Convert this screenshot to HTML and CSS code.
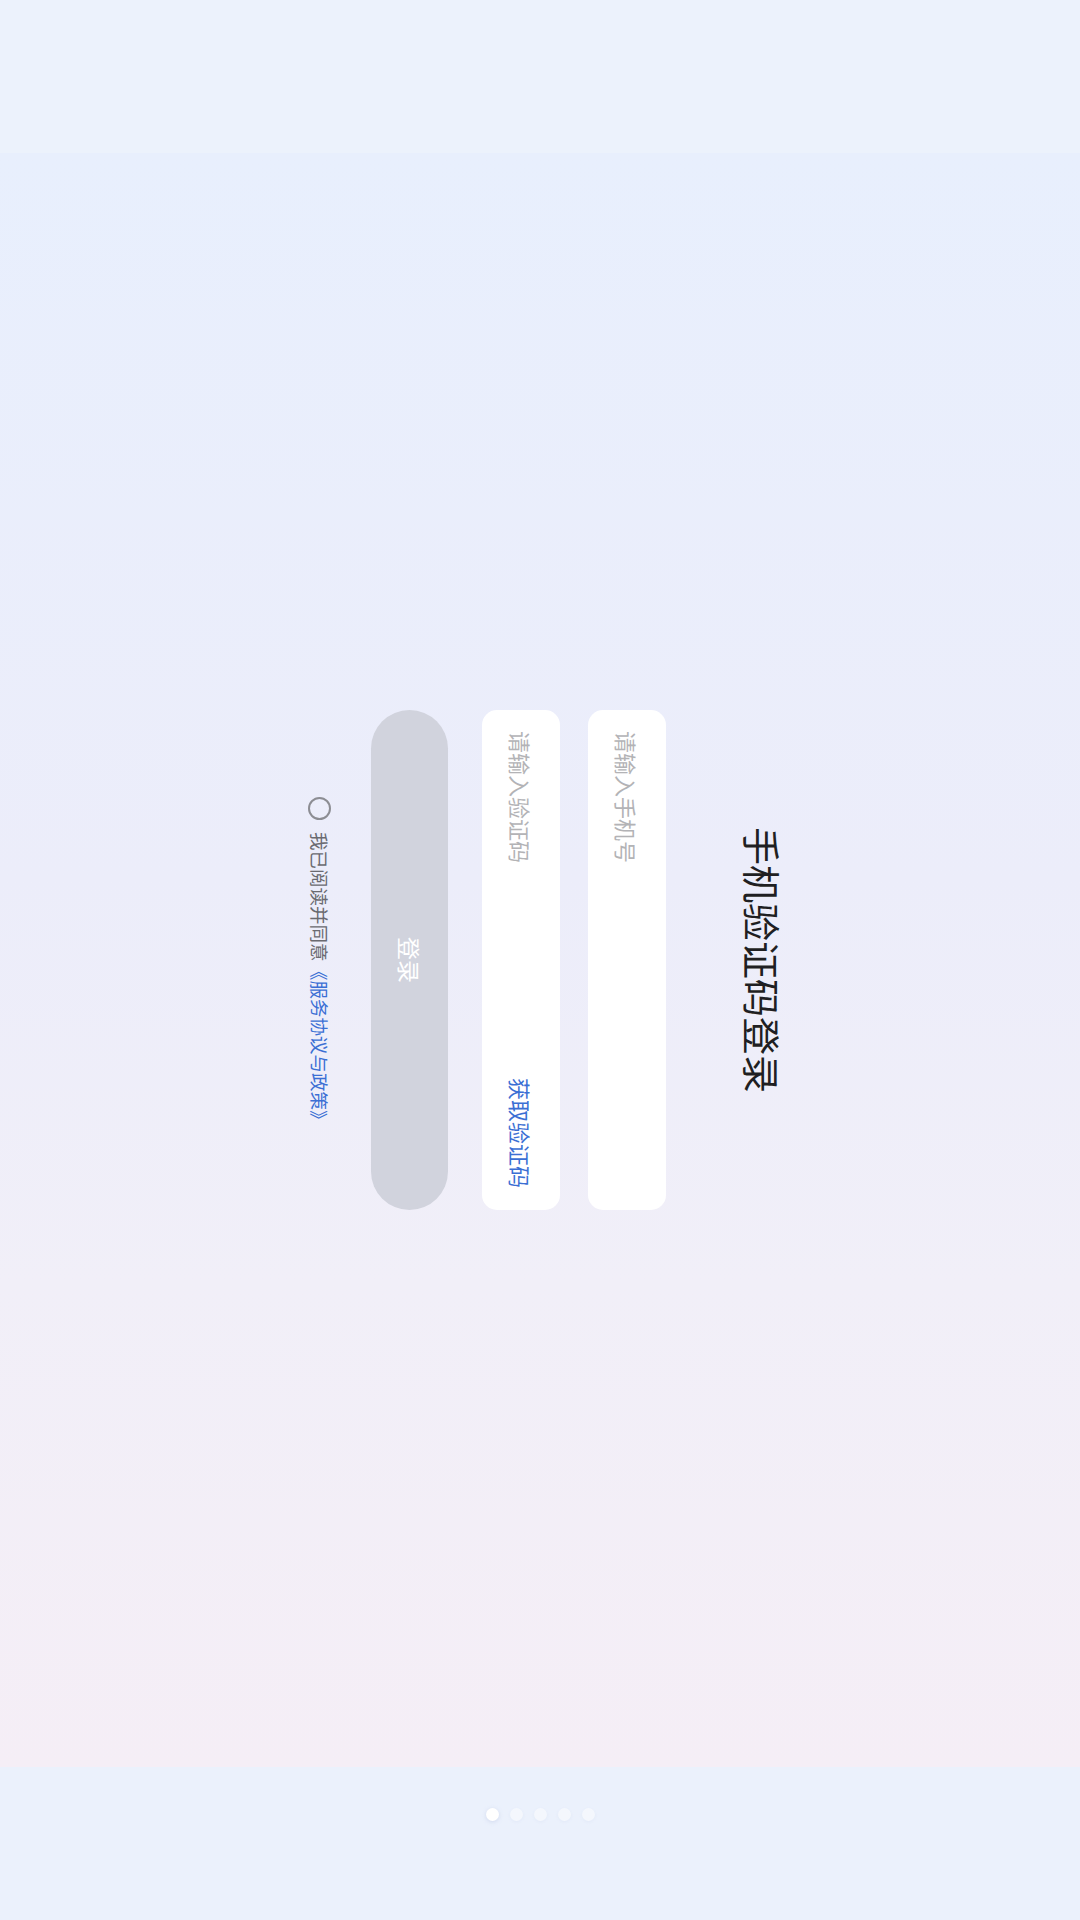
FILE: index.html
```html
<!DOCTYPE html>
<html lang="zh-CN">
<head>
<meta charset="utf-8">
<title>手机验证码登录</title>
<link rel="stylesheet" href="styles.css">
</head>
<body>
<div class="page">
  <div class="top-band"></div>
  <main class="main">
    <form class="form">
      <h1 class="title">手机验证码登录</h1>
      <div class="field">
        <span class="placeholder">请输入手机号</span>
      </div>
      <div class="field field-code">
        <span class="placeholder">请输入验证码</span>
        <span class="get-code">获取验证码</span>
      </div>
      <div class="login-btn">登录</div>
      <div class="agree">
        <span class="radio"></span>
        <span class="agree-text">我已阅读并同意</span><span class="agree-link">《服务协议与政策》</span>
      </div>
    </form>
  </main>
  <div class="bottom-band">
    <div class="dots">
      <span class="dot active"></span>
      <span class="dot"></span>
      <span class="dot"></span>
      <span class="dot"></span>
      <span class="dot"></span>
    </div>
  </div>
</div>
</body>
</html>
```

FILE: styles.css
```css
html, body {
  margin: 0;
  padding: 0;
}
body {
  width: 1080px;
  height: 1920px;
  font-family: "Noto Sans CJK SC", "Noto Sans", sans-serif;
  overflow: hidden;
}
.page {
  width: 1080px;
  height: 1920px;
  display: flex;
  flex-direction: column;
}
.top-band {
  height: 153px;
  background: #ecf2fc;
  flex: none;
}
.main {
  flex: 1;
  background: linear-gradient(to bottom, #e8effd 0%, #ecedfa 45%, #f1eff8 70%, #f5eef6 100%);
  display: flex;
  align-items: center;
  justify-content: center;
}
.form {
  writing-mode: vertical-rl;
  text-orientation: sideways;
  display: flex;
  flex-direction: column;
  align-items: center;
  margin: 0;
  margin-left: 10px;
}
.title {
  margin: 0;
  font-size: 38px;
  line-height: 38px;
  font-weight: 400;
  color: #1f1f22;
  letter-spacing: 0;
}
.field {
  margin-block-start: 78px;
  inline-size: 500px;
  block-size: 78px;
  box-sizing: border-box;
  background: #ffffff;
  border-radius: 15px;
  display: flex;
  align-items: center;
  justify-content: space-between;
  padding-inline: 21px 22px;
}
.field-code {
  margin-block-start: 28px;
}
.placeholder {
  font-size: 22px;
  line-height: 22px;
  color: #b3b3b6;
}
.get-code {
  font-size: 22px;
  line-height: 22px;
  color: #3b6fd4;
}
.login-btn {
  margin-block-start: 34px;
  inline-size: 500px;
  block-size: 77px;
  border-radius: 39px;
  background: #d1d3dd;
  color: #ffffff;
  font-size: 23px;
  line-height: 23px;
  display: flex;
  align-items: center;
  justify-content: center;
}
.agree {
  margin-block-start: 40px;
  display: flex;
  align-items: center;
  font-size: 18.5px;
  line-height: 19px;
  padding-inline-start: 5px;
}
.radio {
  inline-size: 23px;
  block-size: 23px;
  box-sizing: border-box;
  border: 2px solid #8c8d93;
  border-radius: 50%;
  margin-inline-end: 12px;
}
.agree-text {
  color: #6a6a70;
}
.agree-link {
  color: #3b6fd4;
}
.bottom-band {
  height: 153px;
  flex: none;
  background: #ebf1fc;
  display: flex;
  justify-content: center;
  padding-top: 41px;
  box-sizing: border-box;
}
.dots {
  display: flex;
  gap: 11px;
  height: 13px;
}
.dot {
  width: 13px;
  height: 13px;
  border-radius: 50%;
  background: rgba(255, 255, 255, 0.45);
  box-shadow: 0 1px 3px rgba(220, 228, 245, 0.6);
}
.dot.active {
  background: #ffffff;
  box-shadow: 0 1px 4px rgba(200, 210, 235, 0.8);
}
```
